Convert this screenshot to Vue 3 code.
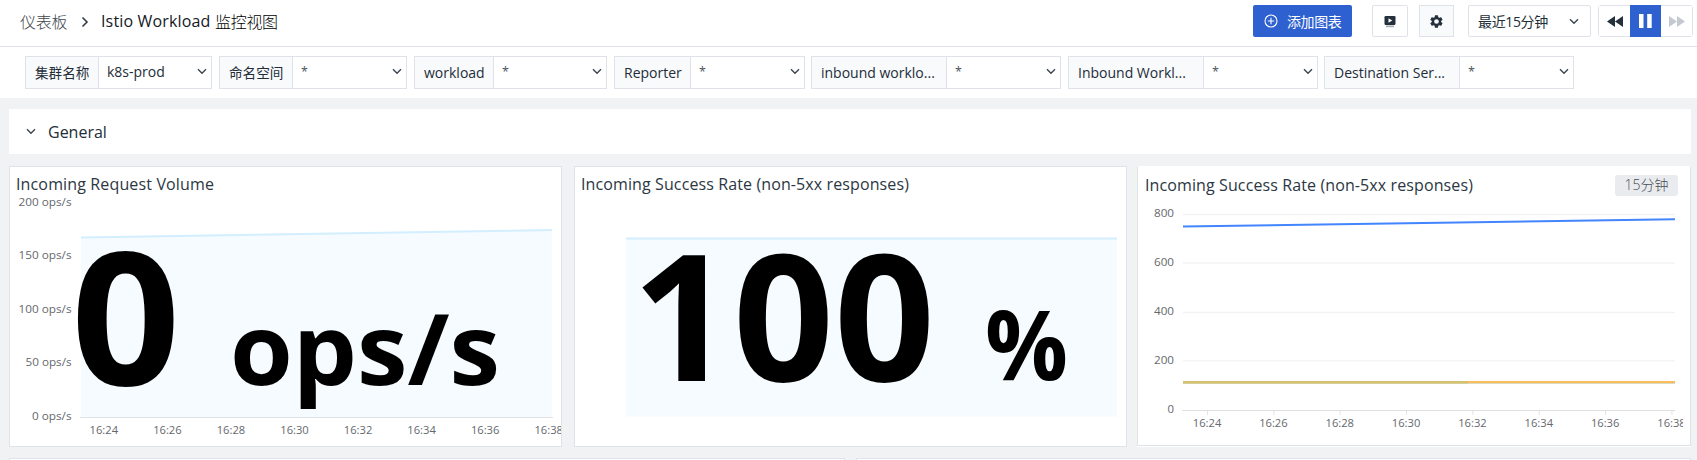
<script setup>
const filters = [
  { label: '集群名称', value: 'k8s-prod', width: 187, labelWidth: 73, gap: 7, cjk: true },
  { label: '命名空间', value: '*', width: 188, labelWidth: 73, gap: 7, cjk: true },
  { label: 'workload', value: '*', width: 193, labelWidth: 79, gap: 7 },
  { label: 'Reporter', value: '*', width: 191, labelWidth: 76, gap: 6 },
  { label: 'inbound worklo...', value: '*', width: 250, labelWidth: 135, gap: 7 },
  { label: 'Inbound Workl...', value: '*', width: 250, labelWidth: 135, gap: 6 },
  { label: 'Destination Ser...', value: '*', width: 250, labelWidth: 135, gap: 0 },
]
const times = ['16:24', '16:26', '16:28', '16:30', '16:32', '16:34', '16:36', '16:38']
const volumeTicks = [
  { text: '200 ops/s', y: 206, w: 53 },
  { text: '150 ops/s', y: 259, w: 53 },
  { text: '100 ops/s', y: 313, w: 53 },
  { text: '50 ops/s', y: 366, w: 46 },
  { text: '0 ops/s', y: 420, w: 39.5 },
]
const rateTicks = [
  { text: '800', y: 217.3, line: 214.5, w: 20 },
  { text: '600', y: 266, line: 263, w: 20 },
  { text: '400', y: 315, line: 312.5, w: 20 },
  { text: '200', y: 364, line: 360.8, w: 20 },
  { text: '0', y: 413, line: 0, w: 6.5 },
]
</script>

<template>
  <div class="page">
    <header class="topbar">
      <nav class="crumbs">
        <span class="crumb-root">仪表板</span>
        <svg class="crumb-arrow" width="8" height="12" viewBox="0 0 8 12"><path d="M1.5 1.5 6 6 1.5 10.5" /></svg>
        <span class="crumb-page"><span class="latin">Istio Workload</span><span class="cjk">监控视图</span></span>
      </nav>
      <div class="actions">
        <button class="add">
          <svg width="14" height="14" viewBox="0 0 14 14"><circle cx="7" cy="7" r="6" /><path d="M7 3.8v6.4M3.8 7h6.4" /></svg>
          <span>添加图表</span>
        </button>
        <button class="square play">
          <svg width="12" height="13" viewBox="0 0 12 13"><rect x=".5" y="1" width="11" height="9" rx="1.2" fill="#24303b" /><path d="M4.5 3.2v4.6L8.3 5.5z" fill="#fff" /><rect x="2" y="10.5" width="8" height="1.7" fill="#a7acb1" /></svg>
        </button>
        <button class="square gear">
          <svg width="13" height="13" viewBox="1.5 1.5 21 21"><path fill="#24303b" d="M19.4 13a7.500 7.500 0 0 0 0-2l2.100-1.600a.5.5 0 0 0 .1-.6l-2-3.500a.5.5 0 0 0-.6-.2l-2.500 1a7.300 7.300 0 0 0-1.700-1l-.4-2.600a.5.5 0 0 0-.5-.5h-4a.5.5 0 0 0-.5.5L9 5.100a7.700 7.700 0 0 0-1.700 1l-2.500-1a.5.5 0 0 0-.6.2l-2 3.500a.5.5 0 0 0 .1.6L4.500 11a8 8 0 0 0 0 2l-2.200 1.600a.5.5 0 0 0-.1.6l2 3.500c.1.2.4.3.6.2l2.500-1a7.300 7.300 0 0 0 1.700 1l.4 2.600c0 .3.2.5.5.5h4c.3 0 .5-.2.5-.5l.4-2.600a7.700 7.700 0 0 0 1.700-1l2.500 1c.2.1.5 0 .6-.2l2-3.500a.5.5 0 0 0-.1-.6zM12 15.800a3.800 3.800 0 1 1 0-7.600 3.800 3.800 0 0 1 0 7.600z" /></svg>
        </button>
        <div class="range">
          <span>最近15分钟</span>
          <svg class="chev" width="10" height="7" viewBox="0 0 10 7"><path d="M1 1.200 5 5.200 9 1.200" /></svg>
        </div>
        <div class="player">
          <button><svg width="16" height="11" viewBox="0 0 16 11"><path d="M8 0v11L0 5.500zM16 0v11L8 5.500z" fill="#24303b" /></svg></button>
          <button class="on"><svg width="13" height="14" viewBox="0 0 13 14"><path d="M0 0h4.500v14H0zM8.200 0h4.500v14H8.200z" fill="#fff" /></svg></button>
          <button><svg width="16" height="11" viewBox="0 0 16 11"><path d="M0 0v11l8-5.500zM8 0v11l8-5.500z" fill="#c4c9d1" /></svg></button>
        </div>
      </div>
    </header>

    <section class="filters">
      <div v-for="f in filters" :key="f.label" class="filter" :style="{ width: f.width + 'px', marginRight: f.gap + 'px' }">
        <span class="filter-label" :class="{ zh: f.cjk }" :style="{ width: f.labelWidth + 'px' }">{{ f.label }}</span>
        <span class="filter-value">
          <span :class="{ star: f.value === '*' }">{{ f.value }}</span>
          <svg class="chev" width="10" height="7" viewBox="0 0 10 7"><path d="M1 1.200 5 5.200 9 1.200" /></svg>
        </span>
      </div>
    </section>

    <main>
      <section class="group">
        <svg class="chev" width="10" height="7" viewBox="0 0 10 7"><path d="M1 1.200 5 5.200 9 1.200" /></svg>
        <span>General</span>
      </section>

      <div class="cards">
        <article class="card">
          <h3 class="volume-title">Incoming Request Volume</h3>
          <svg width="551" height="249" viewBox="10 197 551 249">
            <path d="M81 237.500 552 230v187H81z" fill="#f5fbff" />
            <path d="M81 237.500 552 230" stroke="#d3eefe" stroke-width="2" fill="none" />
            <path d="M80 417.500h473" stroke="#e0e2e6" />
            <g class="ticks">
              <text v-for="t in volumeTicks" :key="t.text" :x="71.500 - t.w" :y="t.y" :textLength="t.w" lengthAdjust="spacingAndGlyphs">{{ t.text }}</text>
              <text v-for="(t, i) in times" :key="t" :x="89.600 + i * 63.550" y="434" textLength="28.500" lengthAdjust="spacingAndGlyphs">{{ t }}</text>
            </g>
            <text class="big" x="71" y="384.700" font-size="185.500" textLength="109.500" lengthAdjust="spacingAndGlyphs">0</text>
            <text class="big" x="230" y="385" font-size="98" textLength="270" lengthAdjust="spacingAndGlyphs">ops/s</text>
          </svg>
        </article>

        <article class="card">
          <h3>Incoming Success Rate (non-5xx responses)</h3>
          <svg width="551" height="249" viewBox="575 197 551 249">
            <path d="M626 238h491v178.500H626z" fill="#f5fbff" />
            <path d="M626 238.500h491" stroke="#d3eefe" stroke-width="2" />
            <text class="big" x="632" y="380.500" font-size="175.500" textLength="303" lengthAdjust="spacingAndGlyphs">100</text>
            <text class="big" x="985" y="380" font-size="96" textLength="83" lengthAdjust="spacingAndGlyphs">%</text>
          </svg>
        </article>

        <div class="card-wrap">
          <article class="card rate">
            <div class="rate-head">
              <h3>Incoming Success Rate (non-5xx responses)</h3>
              <span class="badge">15分钟</span>
            </div>
            <svg width="545" height="247" viewBox="1138 198 545 247">
              <g class="ticks">
                <template v-for="t in rateTicks" :key="t.text">
                  <path v-if="t.line" :d="`M1183 ${t.line}h492`" stroke="#f2f3f5" stroke-width="1.300" />
                  <text :x="1174 - t.w" :y="t.y" :textLength="t.w" lengthAdjust="spacingAndGlyphs">{{ t.text }}</text>
                </template>
                <template v-for="(t, i) in times" :key="t">
                  <path :d="`M${1207.500 + i * 66.350} 410v5`" stroke="#e0e2e6" />
                  <text :x="1192.800 + i * 66.350" y="427.200" textLength="28.500" lengthAdjust="spacingAndGlyphs">{{ t }}</text>
                </template>
              </g>
              <path d="M1182 410.500h493" stroke="#dddfe3" />
              <path d="M1183 226.600 1675 219.300" stroke="#4285ff" stroke-width="2" />
              <path d="M1183 382.500h492" stroke="#d5dcc0" stroke-width="3" />
              <path d="M1183 382.300h285" stroke="#d6c173" stroke-width="2.600" />
              <path d="M1468 382h207" stroke="#fdbc5c" stroke-width="2" />
            </svg>
          </article>
        </div>
      </div>

      <div class="next-row">
        <article class="peek first"></article>
        <article class="peek"></article>
      </div>
    </main>
  </div>
</template>

<style>
html, body { margin: 0; overflow: hidden; background: #f1f2f4; }
</style>

<style scoped>
.page {
  width: 1697px;
  height: 460px;
  overflow: hidden;
  background: #f1f2f4;
  color: #222d38;
  font-family: "Open Sans", "Noto Sans CJK SC", sans-serif;
  box-sizing: border-box;
}
.page *, .page *::before { box-sizing: border-box; }
button { font: inherit; padding: 0; margin: 0; }
.topbar {
  height: 47px;
  display: flex;
  justify-content: space-between;
  padding: 5px 4px 0 20px;
  background: #fff;
  border-bottom: 1px solid #dfe2e8;
}
.crumbs { display: flex; align-items: center; height: 32px; font-size: 16px; line-height: 30px; }
.crumb-root { color: #40464d; width: 48px; font-weight: 300; letter-spacing: -0.2px; font-family: "Noto Sans CJK SC", sans-serif; }
.crumb-arrow { margin: 1px 12px 0 13px; fill: none; stroke: #333d48; stroke-width: 1.6; }
.crumb-page { display: flex; gap: 4px; color: #14191f; }
.crumb-page .latin { width: 110px; white-space: nowrap; letter-spacing: 0.15px; }
.crumb-page .cjk { font-family: "Noto Sans CJK SC", sans-serif; font-weight: 300; color: #000; letter-spacing: -0.3px; }
.actions { display: flex; height: 32px; }
.add {
  width: 99px;
  display: flex;
  align-items: center;
  padding-left: 11px;
  gap: 9px;
  border: 0;
  border-radius: 2px;
  background: #2e61cf;
  color: #fff;
  font-size: 14px;
  letter-spacing: -0.4px;
  white-space: nowrap;
}
.add svg { fill: none; stroke: #fff; stroke-width: 1.1; flex: none; }
.square {
  display: flex;
  align-items: center;
  justify-content: center;
  border: 1px solid #dfe2e8;
  border-radius: 2px;
  background: #fff;
}
.play { width: 36px; margin-left: 20px; }
.gear { width: 35px; margin-left: 11px; background: #f9fafc; border-radius: 0; }
.range {
  width: 123px;
  margin-left: 14px;
  display: flex;
  align-items: center;
  justify-content: space-between;
  padding: 0 11px 0 9px;
  border: 1px solid #dfe2e8;
  border-radius: 2px;
  font-size: 14px;
  letter-spacing: -0.35px;
}
.chev { fill: none; stroke: #3c4651; stroke-width: 1.4; flex: none; }
.player { display: flex; width: 95px; margin-left: 7px; border: 1px solid #dfe2e8; border-radius: 3px; }
.player button { flex: 1; display: flex; align-items: center; justify-content: center; border: 0; background: #fff; }
.player .on { background: #2e61cf; margin: -1px 0; }
.filters { height: 51px; display: flex; padding: 9px 0 0 25px; background: #fff; }
.filter { height: 33px; flex: none; display: flex; border: 1px solid #dfe2e8; font-size: 14px; line-height: 32px; }
.filter-label { flex: none; padding-left: 9px; background: #f9fafc; border-right: 1px solid #dfe2e8; white-space: nowrap; }
.filter-label.zh { font-size: 13.6px; }
.filter-value { flex: 1; display: flex; align-items: center; justify-content: space-between; padding: 0 4px 2px 8px; line-height: 28px; }
.star { padding-top: 1px; font-size: 12.5px; color: #4a535d; }
main { padding: 11px 6px 0 9px; }
.group {
  width: 1682px;
  height: 45px;
  display: flex;
  align-items: center;
  gap: 12px;
  padding-left: 17px;
  background: #fff;
  font-size: 16px;
}
.cards { display: flex; margin-top: 12px; gap: 12px; }
.card { width: 553px; height: 281px; border: 1px solid #dfe2e8; background: #fff; flex: none; }
.card svg { display: block; }
h3 { margin: 0; height: 30px; padding-left: 6px; font-size: 16px; font-weight: 400; line-height: 34px; letter-spacing: 0.11px; color: #2b3742; white-space: nowrap; }
.volume-title { letter-spacing: 0.14px; }
.rate h3 { padding-left: 7px; }
.card-wrap { width: 554px; height: 281px; margin-left: -2px; background: #fff; }
.rate { width: 554px; height: 280px; border-top-color: #fff; }
.rate-head { display: flex; justify-content: space-between; height: 31px; padding: 1px 12px 0 0; }
.badge { width: 63px; height: 21px; margin-top: 7px; border-radius: 3px; background: #e9ebef; color: #4a4e53; font-size: 14px; line-height: 20px; text-align: center; font-weight: 300; }
.ticks text { font-size: 11px; fill: #65686d; }
.big { font-family: "Open Sans", sans-serif; font-weight: 700; fill: #000; }
.next-row { display: flex; gap: 11px; margin-top: 11px; }
.peek { width: 835px; height: 20px; background: #fff; border: 1px solid #dfe2e8; }
.peek.first { width: 836px; }
</style>
